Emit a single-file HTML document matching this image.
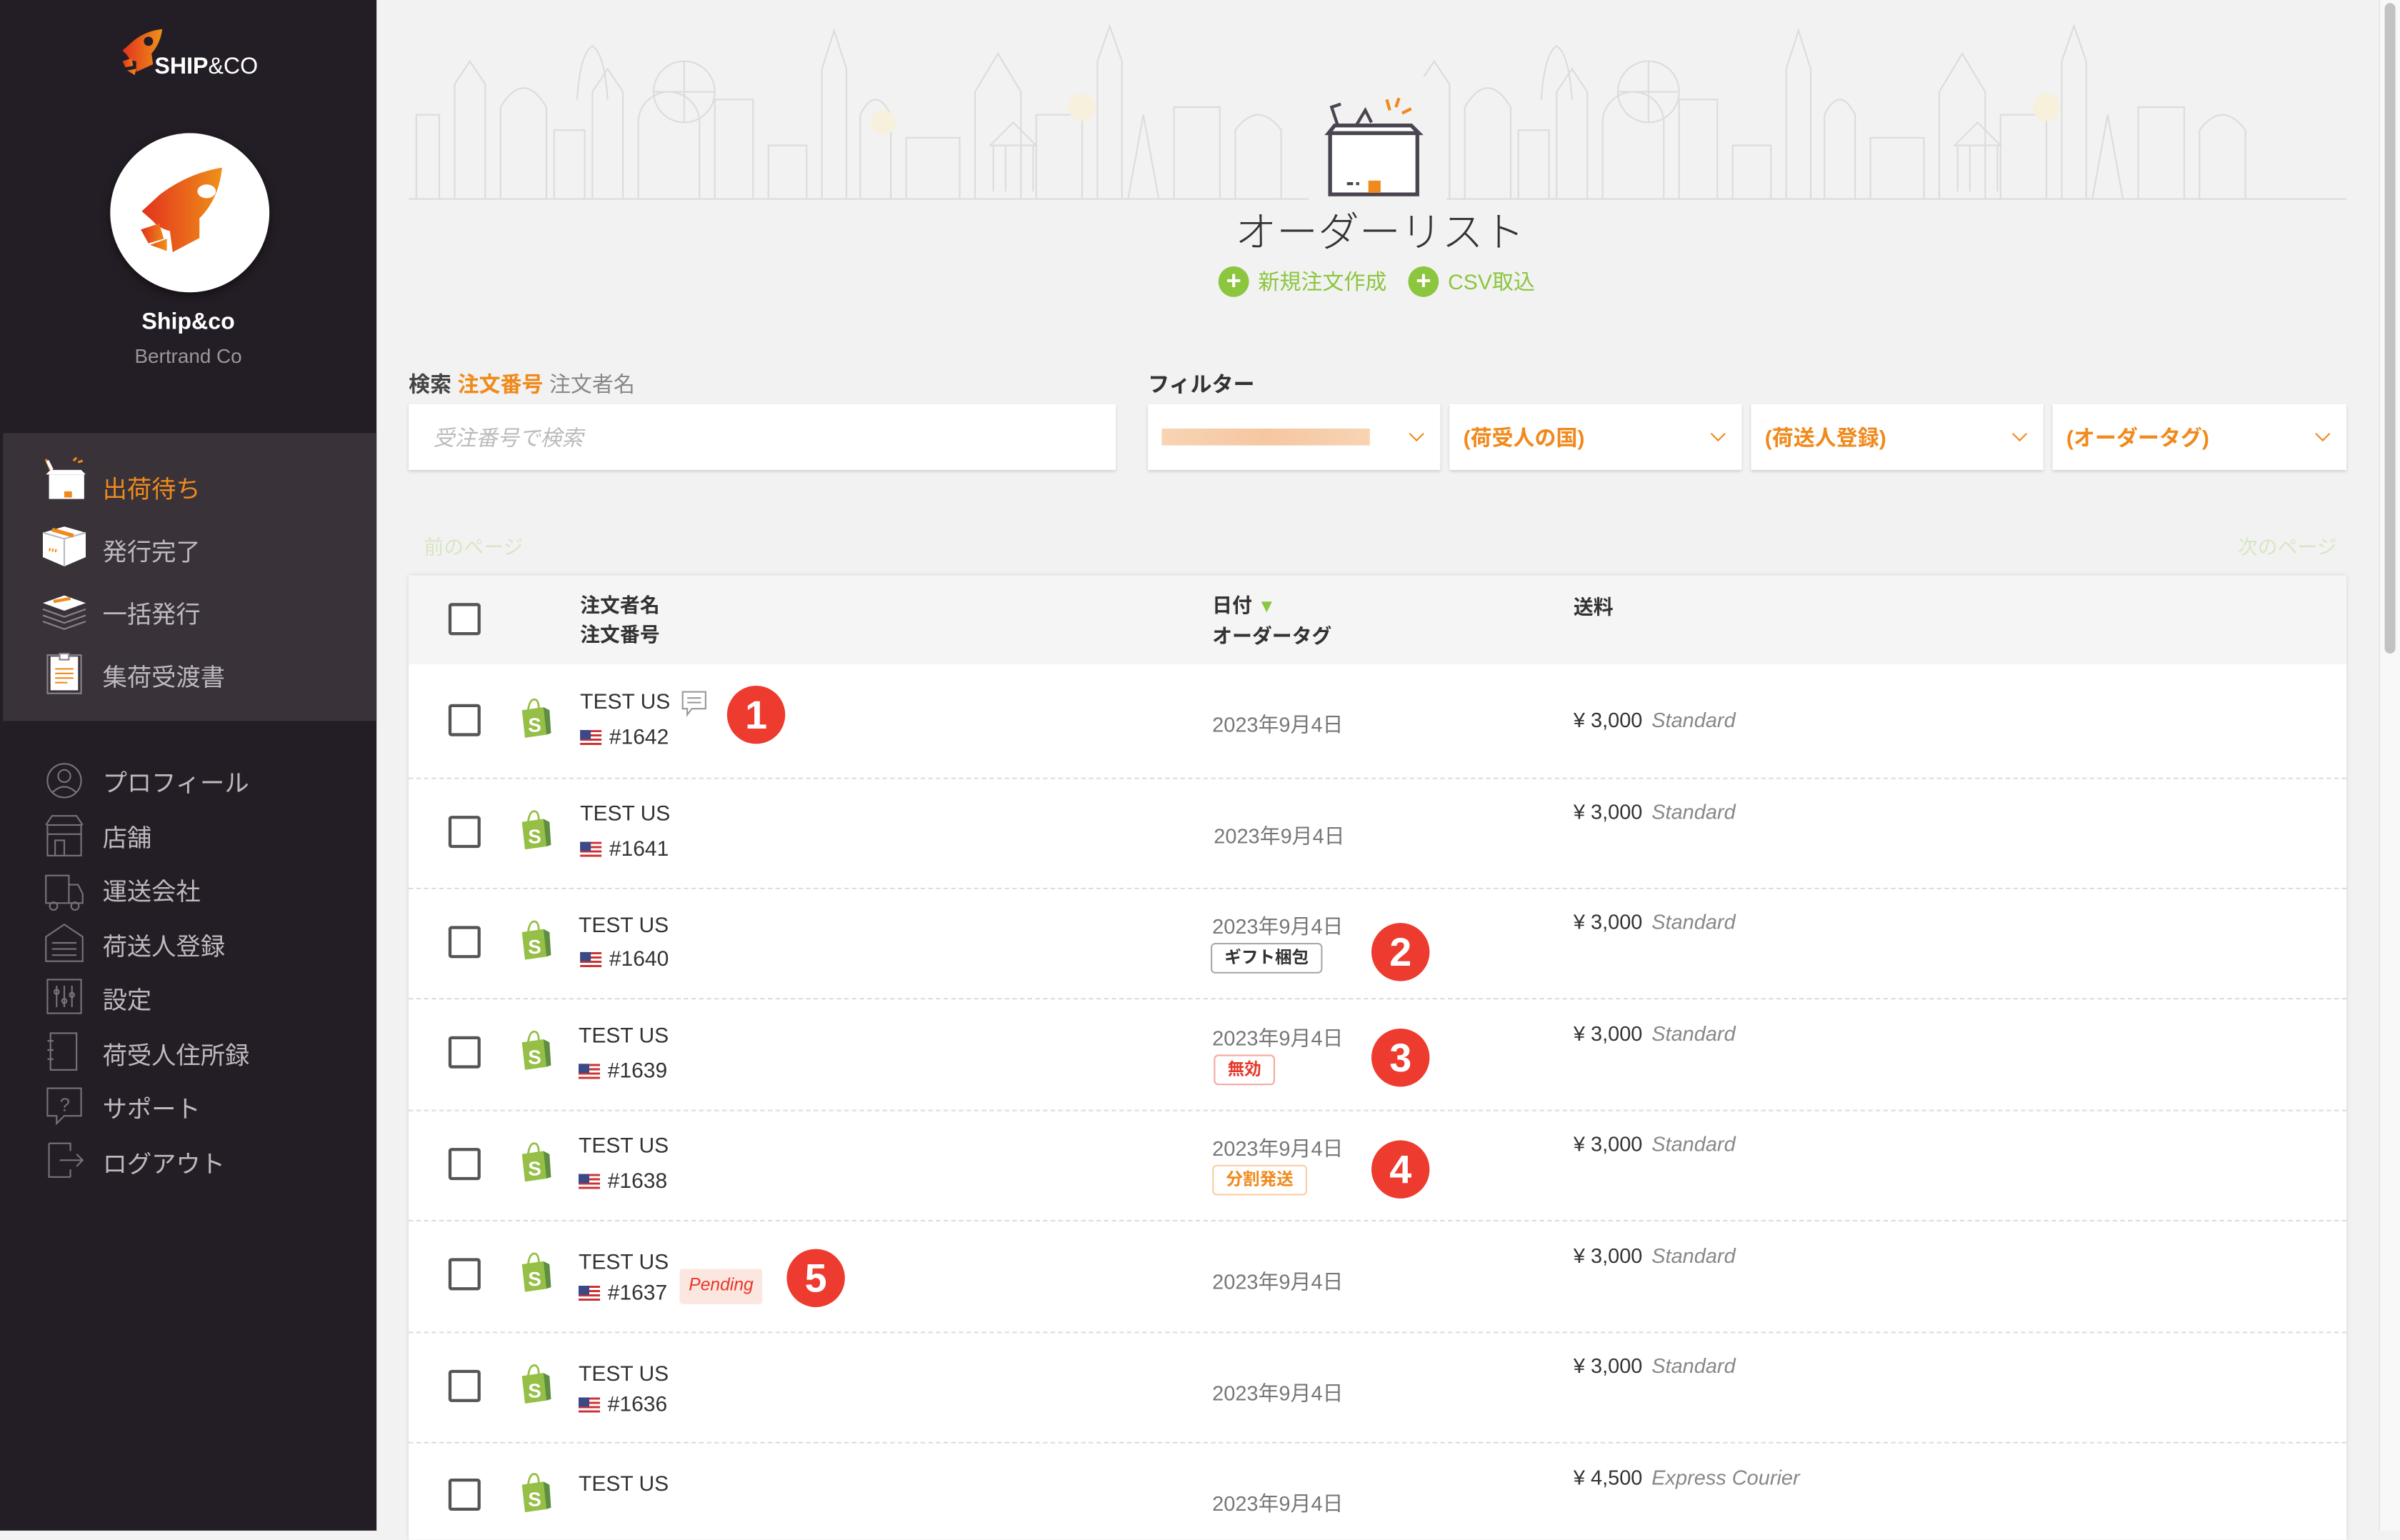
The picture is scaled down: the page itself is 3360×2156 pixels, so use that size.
<!DOCTYPE html>
<html><head><meta charset="utf-8"><style>
*{margin:0;padding:0;box-sizing:border-box}
html,body{width:3360px;height:2100px;overflow:hidden;background:#f2f2f2}
#w{position:absolute;left:0;top:0;width:1568px;height:1000px;transform:scale(2.142857);transform-origin:0 0;font-family:"Liberation Sans","Noto Sans CJK JP",sans-serif;background:#f2f2f2}
.a{position:absolute;white-space:nowrap}
.sb{position:absolute;left:0;top:0;width:246px;height:1000px;background:#231e25}
.nav{color:#bdb9bd;font-size:16px}
.cb{position:absolute;width:21px;height:21px;border:2px solid #555;border-radius:2px;background:#fff}
.nm{font-size:14px;color:#333}
.dt{font-size:13.5px;color:#777}
.pr{font-size:13.5px;color:#333}
.pr i{color:#888;margin-left:6px}
.sep{position:absolute;left:267px;width:1266px;border-top:1px dashed #ddd}
.flag{display:inline-block;width:14px;height:10px;vertical-align:-1px;margin-right:5px;background:repeating-linear-gradient(#c33 0 1.4px,#fff 1.4px 2.8px)}
.flag:before{content:"";display:block;width:7px;height:5.5px;background:#3b4a86}
.badge{position:absolute;width:38px;height:38px;border-radius:50%;background:#ee3b2f;color:#fff;font-weight:bold;font-size:26px;text-align:center;line-height:38px}
.tag{position:absolute;font-size:11px;font-weight:bold;border-radius:3px;padding:0 8px;height:20px;line-height:18px;background:#fff}
.sel{position:absolute;top:264px;height:43px;background:#fff;box-shadow:0 1px 2px rgba(0,0,0,.15);font-size:14px;color:#f08a1c;font-weight:bold;padding:12px 9px}
.sel:after{content:"";position:absolute;right:12px;top:16px;width:6px;height:6px;border-right:1.8px solid #f08a1c;border-bottom:1.8px solid #f08a1c;transform:rotate(45deg)}
</style></head><body><div id="w">

<div class="sb"></div>
<svg class="a" style="left:78px;top:18px" width="30" height="34" viewBox="0 0 30 34"><defs><linearGradient id="g" x1="0" x2="1"><stop offset="0" stop-color="#e2321c"/><stop offset="1" stop-color="#f0901a"/></linearGradient></defs><path d="M2 15 L10 8 Q18 2 28 1 Q27 10 21 17 L22 24 L11 29 L11 22 Q7 22 5 18 Z" fill="url(#g)"/><circle cx="19" cy="9" r="3" fill="#231e25"/><path d="M2 22 L8 20 L9 25 L4 26 Z M5 28 L11 27 L10 31 Z" fill="url(#g)"/></svg>
<div class="a" style="left:101px;top:35px;color:#fff;font-size:15px;line-height:17px"><b>SHIP</b>&amp;CO</div>
<div class="a" style="left:72px;top:87px;width:104px;height:104px;border-radius:50%;background:#fff;box-shadow:0 2px 6px rgba(0,0,0,.5)"></div>
<svg class="a" style="left:88px;top:104px" width="66" height="66" viewBox="0 0 66 66"><path d="M5 37 L18 25 Q38 10 62 6 Q60 28 46 42 L46 56 L27 66 L25 51 Q17 49 13 44 Z" fill="url(#g)" transform="scale(.92)"/><ellipse cx="47" cy="21" rx="6" ry="4.5" fill="#fff"/><path d="M4 46 L16 42 L19 52 L9 55 Z M10 56 L21 52 L21 60 Z" fill="url(#g)"/></svg>
<div class="a" style="left:0;width:246px;text-align:center;top:202px;color:#fff;font-size:15px;font-weight:bold">Ship&amp;co</div>
<div class="a" style="left:0;width:246px;text-align:center;top:225px;color:#9b969b;font-size:13px">Bertrand Co</div>
<div class="a" style="left:2px;top:283px;width:244px;height:188px;background:#393339"></div>

<svg class="a" style="left:28px;top:298px" width="30" height="30"><path d="M2 12 L28 12 L25 9 L5 9 Z" fill="#fff"/><rect x="4" y="12" width="23" height="16" fill="#fff"/><rect x="14" y="23" width="5" height="4" fill="#f08a1c"/><path d="M5 9 L2 2 M20 3 L22 1 M23 4 L26 3" stroke="#f08a1c" stroke-width="1.5"/><path d="M6 9 L3 3" stroke="#fff" stroke-width="2"/></svg>
<div class="a" style="left:67px;top:306px;color:#f08a1c;font-size:16px">出荷待ち</div>
<svg class="a" style="left:26px;top:342px" width="32" height="30"><path d="M2 6 L16 2 L30 6 L30 22 L16 28 L2 22 Z" fill="#fff"/><path d="M2 6 L16 10 L30 6 M16 10 L16 28" stroke="#bbb" fill="none"/><path d="M8 4 L22 8" stroke="#f08a1c" stroke-width="2.5"/><path d="M6 17 L12 18" stroke="#f08a1c" stroke-width="2" stroke-dasharray="1 1"/></svg>
<div class="a nav" style="left:67px;top:347px">発行完了</div>
<svg class="a" style="left:26px;top:386px" width="32" height="28"><path d="M2 8 L16 3 L30 8 L16 13 Z" fill="#fff"/><path d="M9 7 L20 5" stroke="#f08a1c" stroke-width="2"/><path d="M2 12 L16 17 L30 12 M2 16 L16 21 L30 16 M2 20 L16 25 L30 20" stroke="#8a838a" fill="none"/></svg>
<div class="a nav" style="left:67px;top:388px">一括発行</div>
<svg class="a" style="left:30px;top:426px" width="24" height="28"><rect x="1" y="2" width="22" height="25" fill="none" stroke="#8a838a"/><rect x="3" y="3" width="18" height="22" fill="#fff"/><rect x="9" y="1" width="6" height="4" fill="#fff" stroke="#8a838a"/><path d="M6 11 H18 M6 14 H18 M6 17 H18 M6 20 H14" stroke="#f08a1c"/></svg>
<div class="a nav" style="left:67px;top:429px">集荷受渡書</div>

<svg class="a" style="left:28px;top:496px;stroke:#77717a;fill:none" width="28" height="300"><circle cx="14" cy="14" r="11"/><circle cx="14" cy="11" r="4"/><path d="M6 22 Q14 14 22 22"/>
<rect x="3" y="43" width="22" height="20"/><path d="M2 43 L6 37 H22 L26 43 M3 49 H25 M8 63 V53 H14 V63"/>
<rect x="2" y="76" width="15" height="18"/><path d="M17 82 H23 L26 88 V94 H17"/><circle cx="7" cy="96" r="2.5"/><circle cx="21" cy="96" r="2.5"/>
<path d="M2 132 V116 L14 108 L26 116 V132 Z M6 120 H22 M6 124 H22 M6 128 H22"/>
<rect x="3" y="144" width="22" height="22"/><path d="M9 148 V162 M14 148 V162 M19 148 V162"/><circle cx="9" cy="152" r="1.5"/><circle cx="14" cy="158" r="1.5"/><circle cx="19" cy="154" r="1.5"/>
<rect x="5" y="179" width="17" height="24"/><path d="M3 184 H7 M3 190 H7 M3 196 H7"/>
<path d="M3 215 H25 V233 H14 L9 238 V233 H3 Z"/><text x="11" y="230" font-size="12" fill="#77717a" stroke="none">?</text>
<path d="M4 251 V273 H18 M4 251 H18 V256 M18 268 V273 M11 262 H26 M22 258 L26 262 L22 266"/></svg>
<div class="a nav" style="left:67px;top:498px">プロフィール</div>
<div class="a nav" style="left:67px;top:534px">店舗</div>
<div class="a nav" style="left:67px;top:569px">運送会社</div>
<div class="a nav" style="left:67px;top:605px">荷送人登録</div>
<div class="a nav" style="left:67px;top:640px">設定</div>
<div class="a nav" style="left:67px;top:676px">荷受人住所録</div>
<div class="a nav" style="left:67px;top:711px">サポート</div>
<div class="a nav" style="left:67px;top:747px">ログアウト</div>

<svg class="a" style="left:267px;top:15px" width="1266" height="118" viewBox="0 0 1266 118" fill="none" stroke="#dcdcdc" stroke-width="1">
<g id="sk">
<path d="M0 115 H1266"/>
<path d="M5 115 V60 H20 V115 M30 115 V40 L40 25 L50 40 V115 M60 115 V55 Q75 30 90 55 V115 M95 115 V70 H115 V115 M120 115 V45 L130 30 L140 45 V115 M150 115 V65 A20 20 0 0 1 190 65 V115 M200 115 V50 H225 V115 M235 115 V80 H260 V115 M270 115 V30 L278 5 L286 30 V115 M295 115 V60 Q305 40 315 60 V115 M325 115 V75 H360 V115 M370 115 V45 L385 20 L400 45 V115 M410 115 V60 H440 V115 M450 115 V25 L458 2 L466 25 V115 M470 115 L480 60 L490 115 M500 115 V55 H530 V115 M540 115 V70 Q555 50 570 70 V115"/>
<circle cx="180" cy="45" r="20"/><path d="M180 25 V65 M160 45 H200"/>
<path d="M380 80 L395 65 L410 80 Z M382 80 V110 M408 80 V110 M390 80 V110 M400 80 V110"/>
<path d="M110 50 Q112 20 120 15 Q128 20 130 50"/>
</g>
<use href="#sk" x="630"/>
<circle cx="440" cy="55" r="9" fill="#f6f0dc" stroke="none"/><circle cx="1070" cy="55" r="9" fill="#f6f0dc" stroke="none"/><circle cx="310" cy="65" r="8" fill="#f6f0dc" stroke="none"/>
</svg>
<div class="a" style="left:855px;top:50px;width:90px;height:90px;background:#f2f2f2;border-radius:8px"></div>
<svg class="a" style="left:864px;top:62px" width="68" height="68"><path d="M4 25 L8 20 L58 20 L63 25 Z" fill="#fff" stroke="#4a4550" stroke-width="2.5"/><rect x="5" y="25" width="57" height="40" fill="#fff" stroke="#4a4550" stroke-width="2.5"/><rect x="30" y="56" width="8" height="8" fill="#f08a1c"/><path d="M10 20 L6 8 L12 6 M22 20 L28 10 L32 18" stroke="#4a4550" stroke-width="2" fill="none"/><path d="M44 10 L42 3 M48 8 L50 2 M52 12 L58 9" stroke="#f08a1c" stroke-width="2"/><path d="M16 58 H20 M22 58 H24" stroke="#4a4550" stroke-width="2"/></svg>
<div class="a" style="left:807px;top:130px;font-size:27px;color:#333;font-weight:300">オーダーリスト</div>
<div class="a" style="left:796px;top:174px;width:20px;height:20px;border-radius:50%;background:#8cc63f;color:#fff;font-weight:bold;text-align:center;line-height:20px;font-size:17px">+</div>
<div class="a" style="left:822px;top:174px;color:#8cc63f;font-size:14px">新規注文作成</div>
<div class="a" style="left:920px;top:174px;width:20px;height:20px;border-radius:50%;background:#8cc63f;color:#fff;font-weight:bold;text-align:center;line-height:20px;font-size:17px">+</div>
<div class="a" style="left:946px;top:174px;color:#8cc63f;font-size:14px">CSV取込</div>

<div class="a" style="left:267px;top:241px;font-size:14px;color:#444"><b>検索</b> <b style="color:#f08a1c">注文番号</b> <span style="color:#888">注文者名</span></div>
<div class="a" style="left:267px;top:264px;width:462px;height:43px;background:#fff;box-shadow:0 1px 2px rgba(0,0,0,.15);font-size:14px;color:#bbb;font-style:italic;padding:12px 16px">受注番号で検索</div>
<div class="a" style="left:750px;top:241px;font-size:14px;color:#333;font-weight:bold">フィルター</div>
<div class="sel" style="left:750px;width:191px"><div style="width:136px;height:11px;margin-top:4px;background:linear-gradient(90deg,#f6c9a0,#f3b98a,#f6c9a0);opacity:.8"></div></div>
<div class="sel" style="left:947px;width:191px">(荷受人の国)</div>
<div class="sel" style="left:1144px;width:191px">(荷送人登録)</div>
<div class="sel" style="left:1341px;width:192px">(オーダータグ)</div>
<div class="a" style="left:277px;top:347px;font-size:13px;color:#d8e6c4">前のページ</div>
<div class="a" style="left:1462px;top:347px;font-size:13px;color:#d8e6c4">次のページ</div>

<div class="a" style="left:267px;top:376px;width:1266px;height:630px;background:#fff;box-shadow:0 0 3px rgba(0,0,0,.12)"></div>
<div class="a" style="left:267px;top:376px;width:1266px;height:58px;background:#f5f5f5"></div>
<div class="cb" style="left:293px;top:394px"></div>
<div class="a" style="left:379px;top:386px;font-size:13px;font-weight:bold;color:#333;line-height:19px">注文者名<br>注文番号</div>
<div class="a" style="left:792px;top:386px;font-size:13px;font-weight:bold;color:#333;line-height:19px">日付 <span style="color:#8cc63f;font-size:12px">▼</span><br>オーダータグ</div>
<div class="a" style="left:1028px;top:386px;font-size:13px;font-weight:bold;color:#333">送料</div>

<div class="sep" style="top:508px"></div><div class="sep" style="top:580px"></div><div class="sep" style="top:652px"></div><div class="sep" style="top:725px"></div><div class="sep" style="top:797px"></div><div class="sep" style="top:870px"></div><div class="sep" style="top:942px"></div>

<svg width="0" height="0" style="position:absolute"><defs><g id="shop"><path d="M2 8 L16 6 L18 24 L4 26 Z" fill="#95bf47"/><path d="M16 6 L20 8 L21 23 L18 24 Z" fill="#5e8e3e"/><path d="M6 8 Q7 1 10 1 Q13 1 13 7" stroke="#95bf47" stroke-width="1.3" fill="none"/><text x="6" y="22" font-size="13" font-weight="bold" fill="#fff" font-family="Liberation Sans">S</text></g></defs></svg>

<div class="cb" style="left:293px;top:460px"></div><svg class="a" style="left:339px;top:456px" width="24" height="28"><use href="#shop"/></svg>
<div class="a nm" style="left:379px;top:450px">TEST US</div><svg class="a" style="left:445px;top:451px" width="18" height="18" fill="none" stroke="#999"><path d="M1 1 H16 V12 H7 L4 16 V12 H1 Z M4 5 H13 M4 8 H13"/></svg>
<div class="a nm" style="left:379px;top:473px"><span class="flag"></span>#1642</div>
<div class="badge" style="left:475px;top:448px">1</div>
<div class="a dt" style="left:792px;top:462px">2023年9月4日</div><div class="a pr" style="left:1028px;top:463px">¥ 3,000<i>Standard</i></div>

<div class="cb" style="left:293px;top:533px"></div><svg class="a" style="left:339px;top:529px" width="24" height="28"><use href="#shop"/></svg>
<div class="a nm" style="left:379px;top:523px">TEST US</div><div class="a nm" style="left:379px;top:546px"><span class="flag"></span>#1641</div>
<div class="a dt" style="left:793px;top:535px">2023年9月4日</div><div class="a pr" style="left:1028px;top:523px">¥ 3,000<i>Standard</i></div>

<div class="cb" style="left:293px;top:605px"></div><svg class="a" style="left:339px;top:601px" width="24" height="28"><use href="#shop"/></svg>
<div class="a nm" style="left:378px;top:596px">TEST US</div><div class="a nm" style="left:379px;top:618px"><span class="flag"></span>#1640</div>
<div class="a dt" style="left:792px;top:594px">2023年9月4日</div><div class="tag" style="left:791px;top:616px;border:1.5px solid #aaa;color:#333">ギフト梱包</div>
<div class="badge" style="left:896px;top:603px">2</div>
<div class="a pr" style="left:1028px;top:595px">¥ 3,000<i>Standard</i></div>

<div class="cb" style="left:293px;top:677px"></div><svg class="a" style="left:339px;top:673px" width="24" height="28"><use href="#shop"/></svg>
<div class="a nm" style="left:378px;top:668px">TEST US</div><div class="a nm" style="left:378px;top:691px"><span class="flag"></span>#1639</div>
<div class="a dt" style="left:792px;top:667px">2023年9月4日</div><div class="tag" style="left:793px;top:689px;border:1.5px solid #f5aaa2;color:#e8372a">無効</div>
<div class="badge" style="left:896px;top:672px">3</div>
<div class="a pr" style="left:1028px;top:668px">¥ 3,000<i>Standard</i></div>

<div class="cb" style="left:293px;top:750px"></div><svg class="a" style="left:339px;top:746px" width="24" height="28"><use href="#shop"/></svg>
<div class="a nm" style="left:378px;top:740px">TEST US</div><div class="a nm" style="left:378px;top:763px"><span class="flag"></span>#1638</div>
<div class="a dt" style="left:792px;top:739px">2023年9月4日</div><div class="tag" style="left:792px;top:761px;border:1.5px solid #f9cfa6;color:#f08a1c">分割発送</div>
<div class="badge" style="left:896px;top:745px">4</div>
<div class="a pr" style="left:1028px;top:740px">¥ 3,000<i>Standard</i></div>

<div class="cb" style="left:293px;top:822px"></div><svg class="a" style="left:339px;top:818px" width="24" height="28"><use href="#shop"/></svg>
<div class="a nm" style="left:378px;top:816px">TEST US</div><div class="a nm" style="left:378px;top:836px"><span class="flag"></span>#1637</div>
<div class="a" style="left:444px;top:829px;height:23px;padding:0 6px;background:#fbe6e0;color:#e8372a;font-size:11.5px;font-style:italic;line-height:23px;border-radius:2px">Pending</div>
<div class="badge" style="left:514px;top:816px">5</div>
<div class="a dt" style="left:792px;top:826px">2023年9月4日</div><div class="a pr" style="left:1028px;top:813px">¥ 3,000<i>Standard</i></div>

<div class="cb" style="left:293px;top:895px"></div><svg class="a" style="left:339px;top:891px" width="24" height="28"><use href="#shop"/></svg>
<div class="a nm" style="left:378px;top:889px">TEST US</div><div class="a nm" style="left:378px;top:909px"><span class="flag"></span>#1636</div>
<div class="a dt" style="left:792px;top:899px">2023年9月4日</div><div class="a pr" style="left:1028px;top:885px">¥ 3,000<i>Standard</i></div>

<div class="cb" style="left:293px;top:966px"></div><svg class="a" style="left:339px;top:962px" width="24" height="28"><use href="#shop"/></svg>
<div class="a nm" style="left:378px;top:961px">TEST US</div>
<div class="a dt" style="left:792px;top:971px">2023年9月4日</div><div class="a pr" style="left:1028px;top:958px">¥ 4,500<i>Express Courier</i></div>

<div class="a" style="left:1554px;top:0;width:14px;height:1000px;background:#f8f8f8;border-left:1px solid #e8e8e8"></div>
<div class="a" style="left:1558px;top:2px;width:7px;height:425px;background:#c2c2c2;border-radius:4px"></div>
</div></body></html>
